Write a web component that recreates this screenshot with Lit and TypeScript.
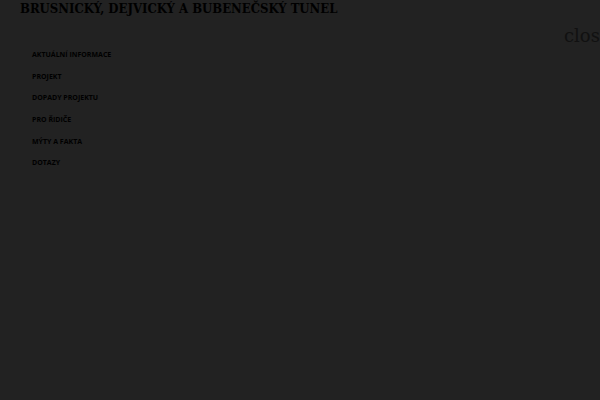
import {LitElement, html, css} from 'lit';
import {customElement} from 'lit/decorators.js';

const MENU = [
  'Aktuální informace',
  'Projekt',
  'Dopady projektu',
  'Pro řidiče',
  'Mýty a fakta',
  'Dotazy',
];

@customElement('app-root')
export class AppRoot extends LitElement {
  static styles = css`
    :host {
      display: block;
      box-sizing: border-box;
      min-height: 100vh;
      overflow: hidden;
      background-color: #222;
      color: #000;
    }
    .title {
      margin: 0;
      padding: 0 20px;
      font: bold 13px/18px 'DejaVu Serif Condensed', 'DejaVu Serif', serif;
      text-transform: uppercase;
    }
    .bar {
      display: flex;
      justify-content: flex-end;
      padding-top: 6px;
    }
    .close {
      width: 36px;
      height: 24px;
      padding: 0;
      border: none;
      overflow: hidden;
      background: none;
      color: #111;
      font: 18px/24px 'DejaVu Serif', serif;
      text-align: left;
      cursor: pointer;
    }
    .menu {
      display: grid;
      grid-auto-rows: 1fr;
      height: 130px;
      margin: 0;
      padding: 0 32px;
      list-style: none;
    }
    .link {
      display: block;
      color: inherit;
      font: bold 7px/13px 'Open Sans', sans-serif;
      text-decoration: none;
      text-transform: uppercase;
    }
  `;

  render() {
    return html`
      <h1 class="title">Brusnický, Dejvický a Bubenečský tunel</h1>
      <div class="bar">
        <button class="close" type="button">close</button>
      </div>
      <nav>
        <ul class="menu">
          ${MENU.map((label) => html`<li><a class="link" href="#">${label}</a></li>`)}
        </ul>
      </nav>
    `;
  }
}
